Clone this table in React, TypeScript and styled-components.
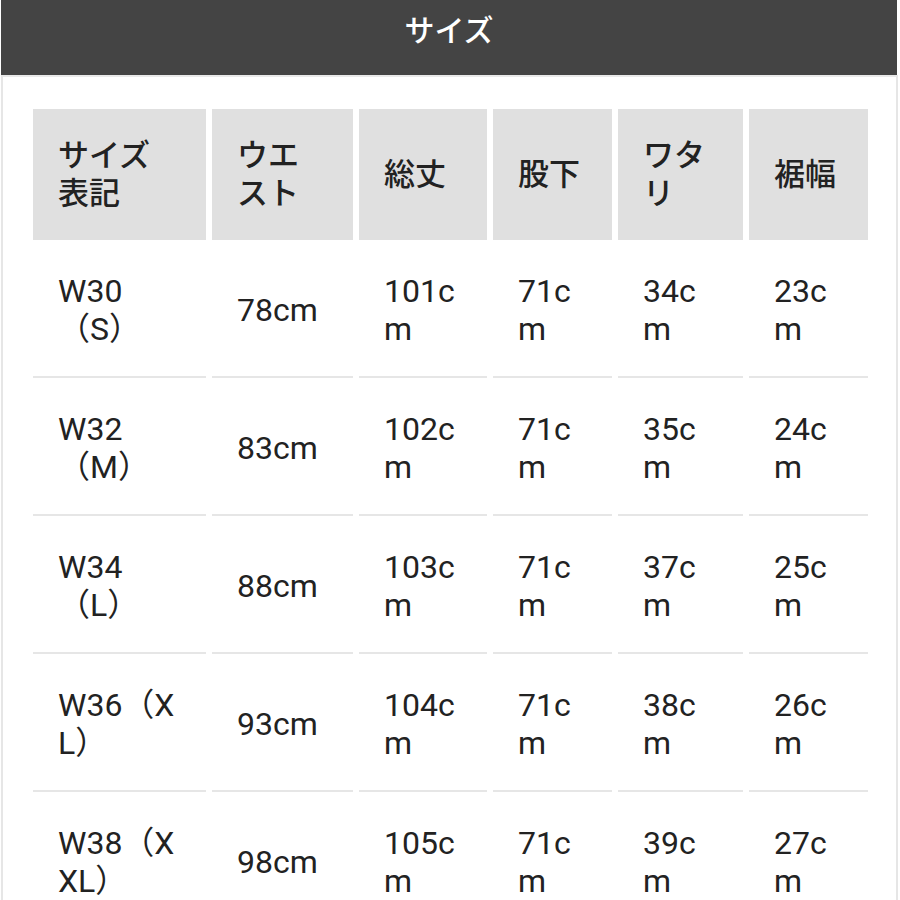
import React from "react";
import styled, { createGlobalStyle } from "styled-components";

const GlobalStyle = createGlobalStyle`
  html, body {
    margin: 0;
    padding: 0;
    background: #ffffff;
  }
  body {
    font-family: Roboto, "Noto Sans CJK JP", sans-serif;
    color: #222222;
  }
`;

const COLUMNS = [173, 141, 128, 119, 125, 119];

const HEADERS = ["サイズ表記", "ウエスト", "総丈", "股下", "ワタリ", "裾幅"];

const ROWS = [
  ["W30（S）", "78cm", "101cm", "71cm", "34cm", "23cm"],
  ["W32（M）", "83cm", "102cm", "71cm", "35cm", "24cm"],
  ["W34（L）", "88cm", "103cm", "71cm", "37cm", "25cm"],
  ["W36（XL）", "93cm", "104cm", "71cm", "38cm", "26cm"],
  ["W38（XXL）", "98cm", "105cm", "71cm", "39cm", "27cm"],
];

const TitleBar = styled.header`
  margin: 0 3px 0 1px;
  height: 75px;
  background-color: #444444;
  display: flex;
  justify-content: center;
  align-items: flex-start;
  padding-top: 8px;
  box-sizing: border-box;
`;

const Title = styled.h1`
  margin: 0;
  font-family: "Noto Sans CJK JP", sans-serif;
  font-size: 30px;
  line-height: 40px;
  font-weight: 500;
  color: #ffffff;
`;

const Panel = styled.section`
  margin: 0 2px 0 1px;
  border-left: 2px solid #e6e6e6;
  border-right: 2px solid #e6e6e6;
  border-top: 2px solid #e9e9e9;
  padding: 32px 0 0 30px;
`;

const SizeGrid = styled.div<{ $columns: number[] }>`
  display: grid;
  grid-template-columns: ${({ $columns }) => $columns.map((w) => `${w}px`).join(" ")};
  column-gap: 6px;
`;

const HeadCell = styled.div`
  height: 131px;
  background-color: #e0e0e0;
  display: flex;
  align-items: center;
  padding: 0 28px 6px 25px;
  box-sizing: border-box;
  font-family: "Noto Sans CJK JP", sans-serif;
  font-size: 31px;
  line-height: 38px;
  font-weight: 500;
  color: #222222;
`;

const BodyCell = styled.div`
  height: 138px;
  border-bottom: 2px solid #e6e6e6;
  display: flex;
  align-items: center;
  padding: 4px 28px 0 25px;
  box-sizing: border-box;
  font-family: Roboto, "Noto Sans CJK JP", sans-serif;
  font-size: 32px;
  line-height: 38px;
  word-break: break-all;
  color: #222222;
`;

const App = () => {
  return (
    <>
      <GlobalStyle />
      <TitleBar>
        <Title>サイズ</Title>
      </TitleBar>
      <Panel>
        <SizeGrid $columns={COLUMNS}>
          {HEADERS.map((head) => (
            <HeadCell key={head}>{head}</HeadCell>
          ))}
          {ROWS.map((row) =>
            row.map((value, i) => <BodyCell key={`${row[0]}-${i}`}>{value}</BodyCell>)
          )}
        </SizeGrid>
      </Panel>
    </>
  );
};

export default App;
